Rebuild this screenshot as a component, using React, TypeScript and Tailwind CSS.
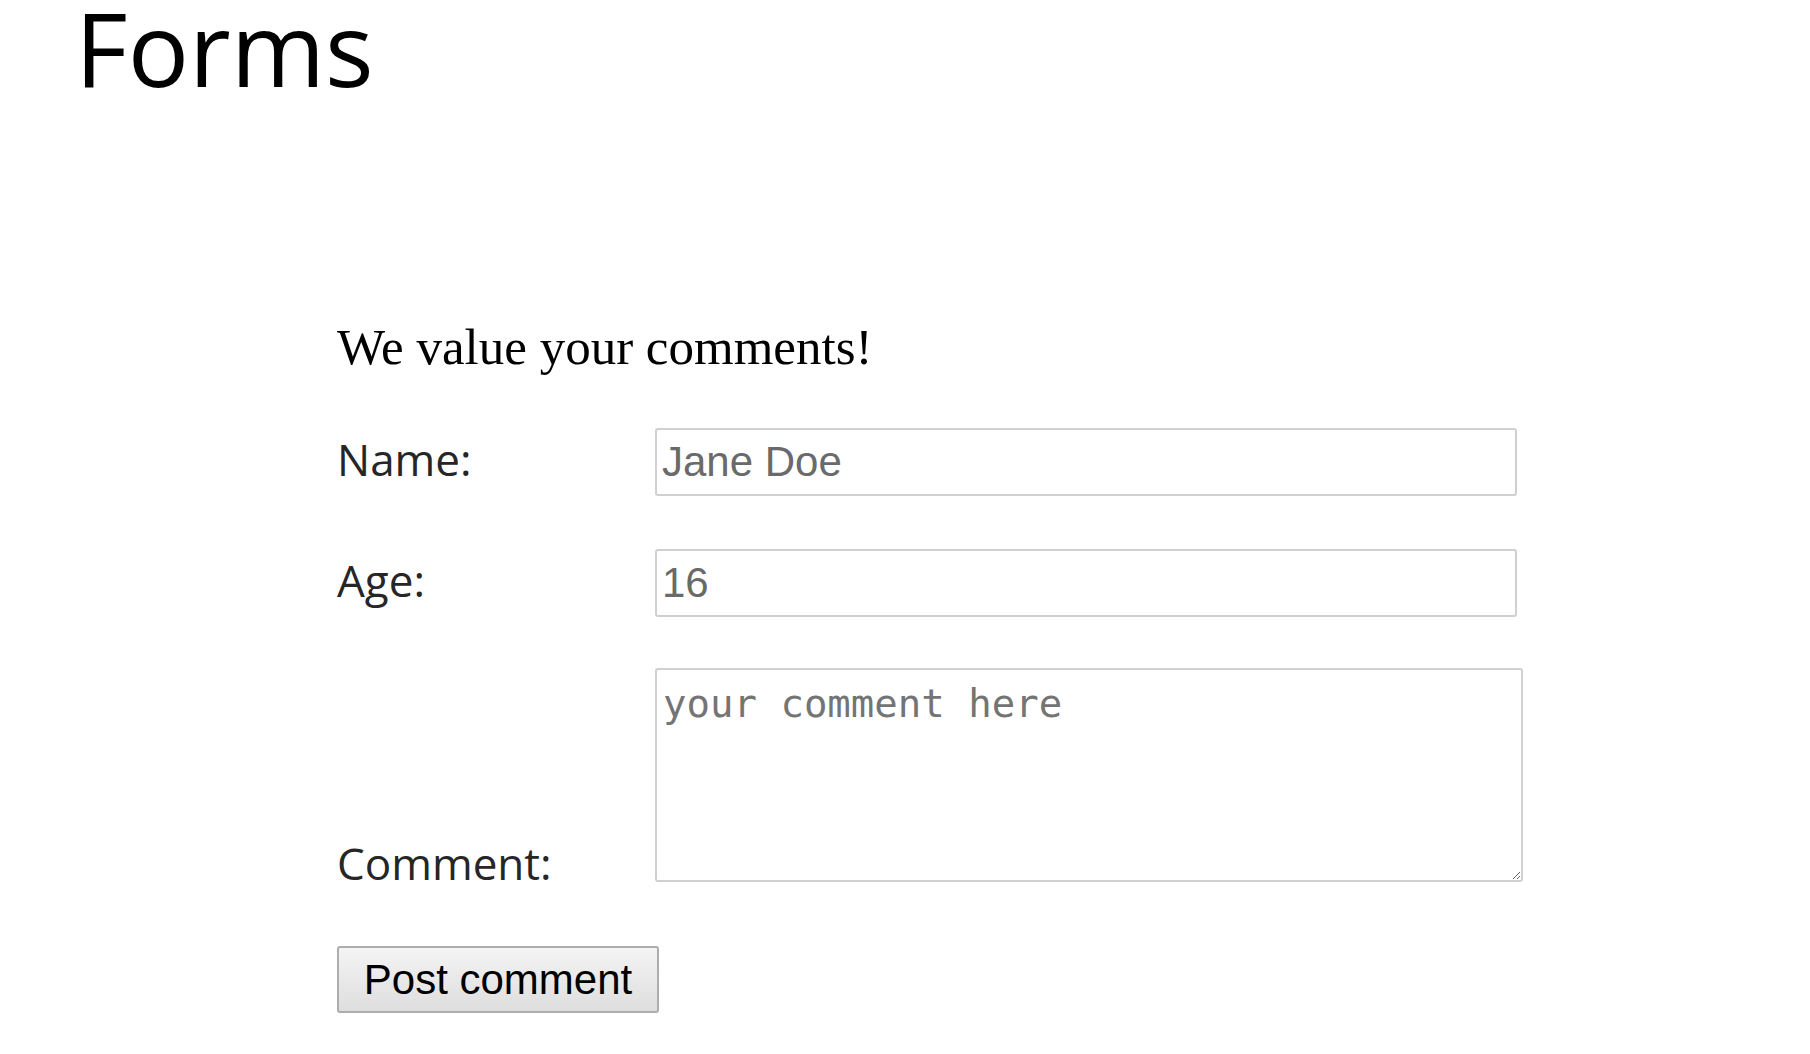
const labelFont = "font-['Open_Sans',sans-serif]";

const App = () => {
  return (
    <div className="min-h-screen bg-white text-black">
      <h1 className="pl-[75px] font-['Open_Sans',sans-serif] text-[102px] font-normal leading-[0.95]">
        Forms
      </h1>

      <form className="ml-[337px] mt-[225px]" onSubmit={(e) => e.preventDefault()}>
        <p className="font-['Liberation_Serif',serif] text-[51px] leading-none">
          We value your comments!
        </p>

        <div className="mt-[53px] flex items-baseline">
          <label htmlFor="name" className={`w-[318px] shrink-0 text-[44px] text-[#262626] ${labelFont}`}>
            Name:
          </label>
          <input
            id="name"
            type="text"
            defaultValue="Jane Doe"
            className="h-[68px] w-[862px] rounded-[3px] border-2 border-[#d0d0d0] bg-white px-[5px] font-['Liberation_Sans',Arial,sans-serif] text-[42px] text-[#6a6a6a] outline-none"
          />
        </div>

        <div className="mt-[51px] flex items-baseline">
          <label htmlFor="age" className={`w-[318px] shrink-0 text-[44px] text-[#262626] ${labelFont}`}>
            Age:
          </label>
          <input
            id="age"
            type="text"
            defaultValue="16"
            className="h-[68px] w-[862px] rounded-[3px] border-2 border-[#d0d0d0] bg-white px-[5px] font-['Liberation_Sans',Arial,sans-serif] text-[42px] text-[#6a6a6a] outline-none"
          />
        </div>

        <div className="mt-[51px] flex items-end">
          <label htmlFor="comment" className={`-mb-[14px] w-[318px] shrink-0 text-[44px] text-[#262626] ${labelFont}`}>
            Comment:
          </label>
          <textarea
            id="comment"
            placeholder="your comment here"
            className="h-[214px] w-[868px] rounded-[3px] border-2 border-[#d0d0d0] bg-white px-[6px] pt-[5px] font-['DejaVu_Sans_Mono',monospace] text-[39px] text-[#6a6a6a] outline-none placeholder:text-[#747474]"
          />
        </div>

        <button
          type="submit"
          className="mt-[64px] block h-[67px] w-[322px] rounded-[3px] border-2 border-[#adadad] bg-gradient-to-b from-[#f4f4f4] to-[#dedede] font-['Liberation_Sans',Arial,sans-serif] text-[42px] text-black"
        >
          Post comment
        </button>
      </form>
    </div>
  );
};

export default App;
